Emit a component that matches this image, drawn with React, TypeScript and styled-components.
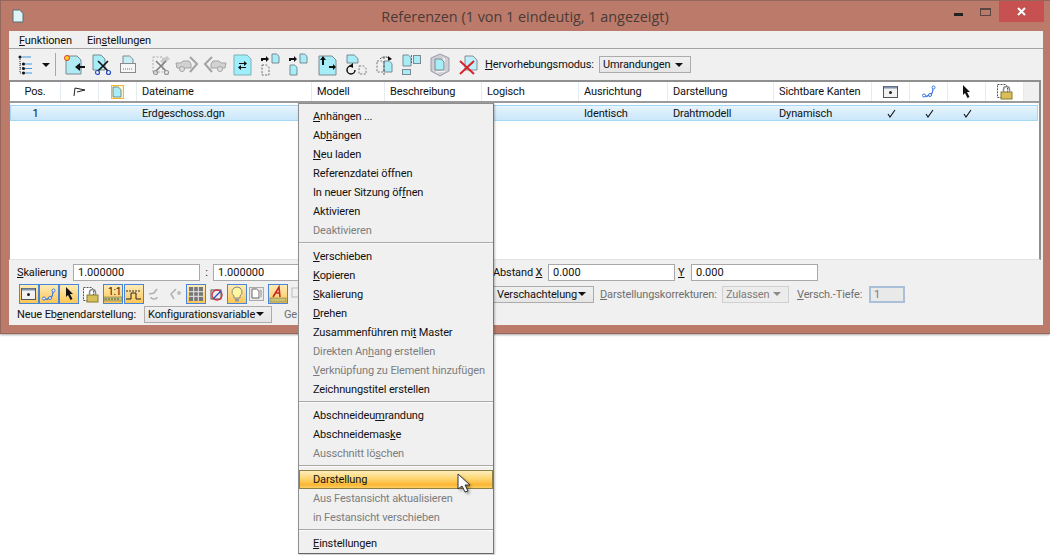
import React from 'react'
import styled, { createGlobalStyle, css } from 'styled-components'

const Global = createGlobalStyle`
  html, body { margin: 0; padding: 0; background: #fff; }
  * { box-sizing: border-box; }
  body { font-family: Roboto, "Liberation Sans", Arial, sans-serif; font-size: 11px; letter-spacing: -0.13px; color: #111; }
`

const Page = styled.div`
  position: relative;
  width: 1050px;
  height: 555px;
  overflow: hidden;
`

/* window frame */
const Win = styled.div`
  width: 1050px;
  height: 334px;
  background: #bc7a6b;
  border: 1px solid #94675a;
  border-right: 0;
  padding: 0 7px 8px 8px;
  display: flex;
  flex-direction: column;
  box-shadow: 0 1px 2px rgba(0,0,0,.35);
`

const TitleBar = styled.div`
  height: 30px;
  flex: none;
  display: grid;
  grid-template-columns: 120px 1fr 120px;
  align-items: center;
`

const TitleIcon = styled.div`
  padding: 0 0 0 3px;
  display: flex;
`

const Title = styled.div`
  font-family: "Open Sans", "Noto Sans", sans-serif;
  font-size: 14.4px;
  letter-spacing: 0;
  color: #4a3a36;
  text-align: center;
  padding: 1px 2px 0 0;
`

const Controls = styled.div`
  display: flex;
  justify-content: flex-end;
  align-self: start;
  align-items: flex-start;
  margin-right: -1px;
`

const MinBtn = styled.div`
  width: 9px;
  height: 3px;
  background: #222;
  margin: 12px 17px 0 0;
`

const MaxBtn = styled.div`
  width: 11px;
  height: 8px;
  border: 1px solid #5a4640;
  border-top-width: 2px;
  margin: 7px 8px 0 0;
`

const CloseBtn = styled.div`
  width: 45px;
  height: 21px;
  background: #c75050;
  color: #fff;
  display: flex;
  align-items: center;
  justify-content: center;
`

const Client = styled.div`
  flex: 1;
  background: #f0f0f0;
  display: flex;
  flex-direction: column;
  min-height: 0;
`

const MenuBar = styled.div`
  height: 18px;
  flex: none;
  display: flex;
  gap: 15px;
  padding: 2px 0 0 10px;
  border-bottom: 1px solid #a3a3a3;
  line-height: 16px;
  font-size: 11px;
`

const Toolbar = styled.div`
  height: 31px;
  flex: none;
  display: flex;
  align-items: center;
  padding-left: 8px;
`

const Slot = styled.span<{ $w: number }>`
  width: ${p => p.$w}px;
  flex: none;
  display: flex;
  align-items: center;
`

const Sep = styled.span`
  width: 1px;
  height: 23px;
  background: #a8a8a8;
`

const Label = styled.span<{ $w?: number; $ml?: number; $dim?: boolean }>`
  flex: none;
  white-space: nowrap;
  font-size: 11px;
  ${p => p.$w && css`width: ${p.$w}px;`}
  ${p => p.$ml && css`margin-left: ${p.$ml}px;`}
  ${p => p.$dim && css`color: #6f6f6f;`}
`

const Combo = styled.div<{ $w: number; $ml?: number; $dim?: boolean }>`
  width: ${p => p.$w}px;
  height: 17px;
  flex: none;
  border: 1px solid #acacac;
  background: linear-gradient(#f0f0f0, #e5e5e5);
  display: flex;
  align-items: center;
  justify-content: space-between;
  padding: 0 7px 0 3px;
  font-size: 11px;
  ${p => p.$ml && css`margin-left: ${p.$ml}px;`}
  ${p => p.$dim && css`color: #7c7c7c; border-color: #d0d0d0; background: #ececec;`}
`

const Caret = styled.span<{ $dim?: boolean }>`
  width: 0;
  height: 0;
  border: 4px solid transparent;
  border-top: 4px solid ${p => (p.$dim ? '#8a8a8a' : '#111')};
  border-bottom: 0;
`

/* reference table */
const Table = styled.div`
  height: 180px;
  flex: none;
  margin-right: 2px;
  background: #fff;
  border-top: 2px solid #8f8f8f;
  border-left: 1px solid #8f8f8f;
  border-right: 2px solid #8f8f8f;
  border-bottom: 1px solid #e3e3e3;
`

const cols = '51px 38px 38px 175px 73px 97px 97px 89px 106px 98px 38px 38px 38px 38px 1fr'

const HeadRow = styled.div`
  height: 21px;
  display: grid;
  grid-template-columns: ${cols};
  border-bottom: 2px solid #9b9b9b;
`

const HeadCell = styled.div<{ $center?: boolean; $blank?: boolean }>`
  display: flex;
  align-items: center;
  padding-left: 5px;
  border-right: 1px solid #e4ebf3;
  font-size: 11px;
  ${p => p.$center && css`justify-content: center; padding-left: 0;`}
  ${p => p.$blank && css`background: #f0f0f0; border-right: 0;`}
`

const DataRow = styled.div`
  height: 16px;
  margin: 2px 1px 0 0;
  display: grid;
  grid-template-columns: ${cols};
  background: linear-gradient(#e9f5fd, #c8e6fa);
  box-shadow: inset 0 0 0 1px #a6d8f6;
  font-size: 11px;
`

const DataCell = styled.div<{ $center?: boolean }>`
  display: flex;
  align-items: center;
  padding-left: 5px;
  ${p => p.$center && css`justify-content: center; padding-left: 0;`}
`

/* lower form */
const Form = styled.div`
  padding: 4px 0 0 8px;
  display: flex;
  flex-direction: column;
`

const FormRow = styled.div<{ $h: number; $mt?: number }>`
  height: ${p => p.$h}px;
  margin-top: ${p => p.$mt || 0}px;
  display: flex;
  align-items: center;
`

const Field = styled.input<{ $w?: number }>`
  width: ${p => p.$w || 127}px;
  height: 17px;
  flex: none;
  border: 1px solid #a9a9a9;
  background: #fff;
  padding: 0 4px;
  font: 11px Roboto, "Liberation Sans", Arial, sans-serif;
  color: #111;
  outline: none;
`

const DepthField = styled(Field)`
  height: 17px;
  border: 2px solid #a9c0d8;
  background: #e9e9e9;
  color: #7c7c7c;
  padding: 0 3px;
`

const Strip = styled.div`
  width: 476px;
  flex: none;
  display: flex;
  align-items: center;
  padding-left: 2px;
`

const Tog = styled.span<{ $on?: boolean; $mr?: number; $w?: number }>`
  width: ${p => p.$w || 20}px;
  height: 20px;
  flex: none;
  display: flex;
  align-items: center;
  justify-content: center;
  margin-right: ${p => p.$mr || 0}px;
  ${p => p.$on && css`
    border: 1px solid #4a86d8;
    background: linear-gradient(#fdebb8, #fdc755);
  `}
`

/* context menu and pointer lie over the window */
const Menu = styled.div`
  position: absolute;
  left: 298px;
  top: 103px;
  width: 196px;
  height: 451px;
  background: #f0f0f0;
  border: 1px solid #8f8f8f;
  border-right-color: #777;
  border-bottom-color: #666;
  padding-top: 3px;
  box-shadow: 1px 1px 2px rgba(0,0,0,.25);
`

const Item = styled.div<{ $dim?: boolean; $hot?: boolean }>`
  height: 19px;
  line-height: 19px;
  padding-left: 14px;
  font-size: 11px;
  white-space: nowrap;
  ${p => p.$dim && css`color: #7d7d7d;`}
  ${p => p.$hot && css`
    border: 1px solid #8e7f45;
    line-height: 17px;
    padding-left: 13px;
    background: linear-gradient(#fdeebc, #fdd670 45%, #fbb635 80%, #fccf60);
  `}
`

const MenuSep = styled.div`
  height: 7px;
  padding-bottom: 2px;
  display: flex;
  align-items: center;
  &::before {
    content: '';
    flex: 1;
    height: 1px;
    background: #a9a9a9;
    box-shadow: 0 1px 0 #fbfbfb;
  }
`

const Pointer = styled.svg`
  position: absolute;
  left: 456px;
  top: 472px;
`

const Mnemonic = ({ t }: { t: string }) => {
  const i = t.indexOf('&')
  if (i < 0) return <>{t}</>
  return <>{t.slice(0, i)}<u>{t[i + 1]}</u>{t.slice(i + 2)}</>
}

/* ---- drawings ---- */
const PageShape = ({ x, y, w, h, fill = '#a6edf8', stroke = '#7b8a90', dash }: { x: number; y: number; w: number; h: number; fill?: string; stroke?: string; dash?: boolean }) => {
  const f = Math.min(4, w / 3)
  return <path d={`M${x} ${y}h${w - f}l${f} ${f}v${h - f}h${-w}z`} fill={dash ? 'none' : fill} stroke={stroke} strokeDasharray={dash ? '2 1.5' : undefined} />
}

const Ic = ({ w = 24, h = 22, children }: { w?: number; h?: number; children: React.ReactNode }) => (
  <svg width={w} height={h} viewBox={`0 0 ${w} ${h}`} style={{ display: 'block', overflow: 'visible' }}>{children}</svg>
)

const Arrow = ({ d, c = '#111' }: { d: string; c?: string }) => <path d={d} fill={c} stroke="none" />

const Scissors = ({ x, y, c = '#111', h = '#2a50c8' }: { x: number; y: number; c?: string; h?: string }) => (
  <g transform={`translate(${x} ${y})`} fill="none">
    <path d="M2 0L12 10M12 0L2 10" stroke={c} strokeWidth="1.6" />
    <circle cx="1.5" cy="11.5" r="2" stroke={h} strokeWidth="1.2" />
    <circle cx="12.5" cy="11.5" r="2" stroke={h} strokeWidth="1.2" />
  </g>
)

const Car = ({ flip }: { flip?: boolean }) => (
  <Ic>
    <g transform={flip ? 'translate(24 0) scale(-1 1)' : undefined} fill="none" stroke="#a3a3a3">
      <path d="M1 9h5l2-2h6l2 3v4H2z" fill="#d2d2d2" />
      <circle cx="7" cy="15" r="2.5" fill="#e0e0e0" />
      <path d="M15 3l7 7-7 8" strokeWidth="2" />
    </g>
  </Ic>
)

const TreeIcon = () => (
  <Ic w={18} h={22}>
    <path d="M3 3v16M3 10h4M3 14h4M3 19h4" stroke="#333" fill="none" strokeDasharray="1 1" />
    <path d="M6 3h9M8 10h8M8 14.500h8M8 19h8" stroke="#3f9ae0" fill="none" strokeWidth="1.2" transform="translate(-1 0)" />
    <circle cx="3" cy="3" r="1.5" fill="#111" /><circle cx="6.500" cy="10" r="1.500" fill="#111" /><circle cx="6.500" cy="14.500" r="1.500" fill="#111" /><circle cx="6.500" cy="19" r="1.500" fill="#111" />
  </Ic>
)

const ViewIcon = () => (
  <Ic w={16} h={12}>
    <rect x=".5" y=".5" width="14" height="11" fill="#f2f2f2" stroke="#555" />
    <path d="M1 1.500h13" stroke="#7d93ae" strokeWidth="2" />
    <circle cx="7.500" cy="6.500" r="1.500" fill="#222" />
  </Ic>
)

const PathIcon = () => (
  <Ic w={14} h={13}>
    <path d="M2 11c3 1 4 0 5-1 3 0 4-3 4-7" fill="none" stroke="#3a74e0" strokeWidth="1.200" />
    <circle cx="2" cy="10.500" r="1.500" fill="#fff" stroke="#3a74e0" /><circle cx="8" cy="10" r="1.500" fill="#fff" stroke="#3a74e0" /><circle cx="11.500" cy="2.500" r="1.500" fill="#fff" stroke="#3a74e0" />
  </Ic>
)

const CursorIcon = () => (
  <Ic w={9} h={14}><path d="M1 0l7 7H5l2.500 5-2 1L3 8 1 10z" fill="#111" /></Ic>
)

const LockIcon = () => (
  <Ic w={18} h={17}>
    <path d="M1.500 1.500h8l2 2v11h-10z" fill="#fff" stroke="#555" strokeDasharray="2 1" />
    <rect x="5" y="9" width="11" height="7" fill="#d9bf5a" stroke="#8a7a30" />
    <path d="M7.500 9V6.500a3 3 0 016 0V9" fill="none" stroke="#8a8a8a" strokeWidth="1.500" />
  </Ic>
)

const Check = () => (
  <Ic w={9} h={9}><path d="M1 5l2 3 5-7" fill="none" stroke="#111" strokeWidth="1.100" /></Ic>
)

const toolIcons: { w: number; el: React.ReactNode }[] = [
  { w: 29, el: <Ic><PageShape x={2} y={2} w={15} h={18} fill="#b0eaf5" /><circle cx="3" cy="4" r="2.500" fill="#ffd21f" stroke="#e0392b" /><Arrow d="M11 13l5-4v3h5v2h-5v3z" /></Ic> },
  { w: 27, el: <Ic><PageShape x={0} y={1} w={12} h={15} /><Scissors x={3} y={7} /></Ic> },
  { w: 32, el: <Ic><PageShape x={3} y={2} w={10} h={8} fill="#c6eef6" /><rect x=".5" y="9.500" width="15" height="9" fill="#f5f5f5" stroke="#8a8a8a" /><path d="M3 15h10" stroke="#777" strokeDasharray="1 1" /></Ic> },
  { w: 23, el: <Ic><rect x="1" y="3" width="10" height="15" fill="none" stroke="#aaa" strokeDasharray="2 1.500" /><path d="M8 7l7-5 3 3-7 5z" fill="#c9c9c9" /><Scissors x={2} y={7} c="#808080" h="#969696" /></Ic> },
  { w: 28, el: <Car /> },
  { w: 30, el: <Car flip /> },
  { w: 27, el: <Ic><PageShape x={1} y={1} w={17} h={20} fill="#9eeefb" stroke="#7fb0b8" /><Arrow d="M6 9h5V7l3 2.500-3 2.500v-2H6zM13 13H8v-2l-3 2.500L8 16v-2h5z" /></Ic> },
  { w: 28, el: <Ic w={20}><Arrow d="M1 7V4h5V2l3 3-3 3V6H3v1z" /><PageShape x={12} y={0} w={7} h={9} /><PageShape x={2} y={11} w={7} h={10} dash stroke="#666" /></Ic> },
  { w: 30, el: <Ic w={20}><Arrow d="M1 7V4h5V2l3 3-3 3V6H3v1z" /><PageShape x={12} y={0} w={7} h={9} /><PageShape x={2} y={11} w={7} h={10} /></Ic> },
  { w: 28, el: <Ic><PageShape x={1} y={2} w={17} h={19} /><Arrow d="M5 2l3 4H6v5H4V6H2zM11 12h4v-2l3 3-3 3v-2h-4z" /></Ic> },
  { w: 30, el: <Ic><PageShape x={1} y={1} w={11} h={8} /><path d="M5 12a4 4 0 104 4" fill="none" stroke="#111" strokeWidth="1.500" /><Arrow d="M3 12l4-3v5z" /><PageShape x={13} y={12} w={7} h={8} dash stroke="#777" /></Ic> },
  { w: 26, el: <Ic w={18}><path d="M4 5a7 7 0 0110 0" fill="none" stroke="#333" strokeDasharray="2 1" /><Arrow d="M12 2l4 3-4 2z" /><PageShape x={8} y={7} w={8} h={11} /><PageShape x={1} y={7} w={7} h={11} dash stroke="#777" /><path d="M8 3v19" stroke="#666" strokeDasharray="2 2" /></Ic> },
  { w: 28, el: <Ic w={20}><PageShape x={1} y={1} w={8} h={11} /><rect x=".5" y="15.500" width="8" height="5" fill="#a6edf8" stroke="#7b8a90" /><rect x="11.500" y="1.500" width="7" height="8" fill="#a6edf8" stroke="#7b8a90" /><path d="M9.500 1v8" stroke="#666" strokeDasharray="2 1" /></Ic> },
  { w: 29, el: <Ic w={20}><path d="M10 0l9 4v13l-9 5-9-5V4z" fill="#cfcdd6" stroke="#9d9aa8" /><path d="M14 4v13l-8 1" fill="none" stroke="#f4f4f4" strokeWidth="1.500" /><PageShape x={5} y={5} w={9} h={11} /></Ic> },
  { w: 26, el: <Ic w={20}><PageShape x={6} y={2} w={12} h={14} fill="#bdf0f8" stroke="#889" /><path d="M1 7l14 13M15 7L1 20" stroke="#d9232a" strokeWidth="2" /></Ic> },
]

const Ratio = () => (
  <Ic w={18} h={18}>
    <rect x="0" y="12" width="18" height="4" fill="#c9c378" stroke="#6d6a3a" strokeWidth=".5" />
    <path d="M2 13v2M5 13v2M8 13v2M11 13v2M14 13v2" stroke="#333" strokeWidth=".8" />
  </Ic>
)

const RatioLabel = styled.span`
  position: absolute;
  font-size: 10px;
  line-height: 10px;
  top: 2px;
  left: 4px;
`

const RatioWrap = styled.span`
  position: relative;
  display: block;
  width: 18px;
  height: 18px;
`

const menuGroups: { t: string; dim?: boolean; hot?: boolean }[][] = [
  [{ t: '&Anhängen ...' }, { t: 'Ab&hängen' }, { t: '&Neu laden' }, { t: 'Referenzdatei öffnen' }, { t: 'In neuer Sitzung öf&fnen' }, { t: 'Aktivieren' }, { t: 'Deaktivieren', dim: true }],
  [{ t: '&Verschieben' }, { t: '&Kopieren' }, { t: '&Skalierung' }, { t: '&Drehen' }, { t: 'Zusammenführen mi&t Master' }, { t: 'Direkten An&hang erstellen', dim: true }, { t: '&Verknüpfung zu Element hinzufügen', dim: true }, { t: 'Zeichnungstitel erstellen' }],
  [{ t: 'Abschneideu&mrandung' }, { t: 'Abschneidemas&ke' }, { t: 'Ausschnitt lö&schen', dim: true }],
  [{ t: 'Darstellung', hot: true }, { t: 'Aus Festansicht aktualisieren', dim: true }, { t: 'in Festansicht verschieben', dim: true }],
  [{ t: '&Einstellungen' }],
]

const heads = ['Dateiname', 'Modell', 'Beschreibung', 'Logisch', 'Ausrichtung', 'Darstellung', 'Sichtbare Kanten']

export default function App() {
  return (
    <Page>
      <Global />
      <Win>
        <TitleBar>
          <TitleIcon>
            <Ic w={13} h={14}><PageShape x={1} y={1} w={10} h={12} fill="#dff4f7" stroke="#4f6f78" /></Ic>
          </TitleIcon>
          <Title>Referenzen (1 von 1 eindeutig, 1 angezeigt)</Title>
          <Controls>
            <MinBtn /><MaxBtn />
            <CloseBtn><Ic w={9} h={9}><path d="M1 1l7 7M8 1L1 8" stroke="#fff" strokeWidth="2" /></Ic></CloseBtn>
          </Controls>
        </TitleBar>
        <Client>
          <MenuBar>
            <span><u>F</u>unktionen</span>
            <span>Ein<u>s</u>tellungen</span>
          </MenuBar>
          <Toolbar>
            <Slot $w={25}><TreeIcon /></Slot>
            <Slot $w={13}><Caret /></Slot>
            <Slot $w={9}><Sep /></Slot>
            {toolIcons.map((ic, i) => <Slot key={i} $w={ic.w}>{ic.el}</Slot>)}
            <Label $w={114}><u>H</u>ervorhebungsmodus:</Label>
            <Combo $w={92}>Umrandungen<Caret /></Combo>
          </Toolbar>
          <Table>
            <HeadRow>
              <HeadCell $center>Pos.</HeadCell>
              <HeadCell $center><Ic w={13} h={10}><path d="M1 9L2 1l10 2-8 2" fill="none" stroke="#222" /></Ic></HeadCell>
              <HeadCell $center><Ic w={13} h={14}><rect x=".5" y=".5" width="12" height="13" fill="#fdf7c8" stroke="#f2b632" /><PageShape x={2} y={2} w={8} h={10} /></Ic></HeadCell>
              {heads.map(h => <HeadCell key={h}>{h}</HeadCell>)}
              <HeadCell $center><ViewIcon /></HeadCell>
              <HeadCell $center><PathIcon /></HeadCell>
              <HeadCell $center><CursorIcon /></HeadCell>
              <HeadCell $center><LockIcon /></HeadCell>
              <HeadCell $blank />
            </HeadRow>
            <DataRow>
              <DataCell $center>1</DataCell>
              <DataCell /><DataCell />
              <DataCell>Erdgeschoss.dgn</DataCell>
              <DataCell /><DataCell /><DataCell />
              <DataCell>Identisch</DataCell>
              <DataCell>Drahtmodell</DataCell>
              <DataCell>Dynamisch</DataCell>
              <DataCell $center><Check /></DataCell>
              <DataCell $center><Check /></DataCell>
              <DataCell $center><Check /></DataCell>
            </DataRow>
          </Table>
          <Form>
            <FormRow $h={17}>
              <Label $w={56}><u>S</u>kalierung</Label>
              <Field readOnly value="1.000000" />
              <Label $w={13} style={{ textAlign: 'center' }}>:</Label>
              <Field readOnly value="1.000000" />
              <Label $w={55} $ml={153}>Abstand <u>X</u></Label>
              <Field readOnly value="0.000" />
              <Label $w={13} $ml={3}><u>Y</u></Label>
              <Field readOnly value="0.000" />
            </FormRow>
            <FormRow $h={20} $mt={3}>
              <Strip>
                <Tog $on><ViewIcon /></Tog>
                <Tog $on><PathIcon /></Tog>
                <Tog $on $mr={2}><CursorIcon /></Tog>
                <Tog $mr={2}><LockIcon /></Tog>
                <Tog $on $mr={1}><RatioWrap><Ratio /><RatioLabel>1:1</RatioLabel></RatioWrap></Tog>
                <Tog $on $mr={3}><Ic w={16} h={12}><path d="M0 3h2M3 3h2M6 3h2M9 3h2M12 3h2" stroke="#333" /><path d="M0 11h5V5h5v6h5" fill="none" stroke="#222" /></Ic></Tog>
                <Tog $w={16} $mr={4}><Ic w={14} h={12}><path d="M1 6l5-1 3-4M3 9a3 2 0 006 0" fill="none" stroke="#b0b0b0" strokeWidth="1.500" /></Ic></Tog>
                <Tog $w={16} $mr={3}><Ic w={14} h={12}><path d="M8 1L3 6l3 5" fill="none" stroke="#b0b0b0" strokeWidth="1.500" /><circle cx="11" cy="5" r="2" fill="#bdbdbd" /></Ic></Tog>
                <Tog $on $mr={4}><Ic w={14} h={14}><rect width="14" height="14" fill="#777" /><path d="M0 4.700h14M0 9.300h14M4.700 0v14M9.300 0v14" stroke="#e8e8e8" /></Ic></Tog>
                <Tog $w={14} $mr={3}><Ic w={14} h={13}><rect x="1" y="2" width="10" height="9" fill="#eee" stroke="#555" /><circle cx="7" cy="7" r="5" fill="none" stroke="#cc3340" strokeWidth="1.300" /><path d="M3 11l8-8" stroke="#2a50c8" strokeWidth="1.300" /></Ic></Tog>
                <Tog $on $mr={2}><Ic w={12} h={16}><path d="M6 1a5 5 0 00-3 9v2h6v-2a5 5 0 00-3-9z" fill="#fff6a0" stroke="#888" /><rect x="4" y="12.500" width="4" height="3" fill="#999" /></Ic></Tog>
                <Tog $w={15} $mr={4}><Ic w={15} h={15}><rect x=".5" y=".5" width="14" height="13" fill="#e8e8e8" stroke="#aaa" /><PageShape x={3} y={2} w={7} h={9} fill="#fff" stroke="#666" /><path d="M10 3h3v7h-3" fill="#bbb" /></Ic></Tog>
                <Tog $on $mr={3}><Ic w={16} h={17}><path d="M3 11L9 1l1 10M5 7h5" fill="none" stroke="#c7282b" strokeWidth="1.600" /><rect y="12" width="16" height="4" fill="#c9c378" stroke="#6d6a3a" strokeWidth=".5" /></Ic></Tog>
                <Tog $w={14}><Ic w={14} h={14}><rect x="1" y="1" width="11" height="9" fill="none" stroke="#bbb" /></Ic></Tog>
              </Strip>
              <Combo $w={101}>Verschachtelung<Caret /></Combo>
              <Label $dim $w={122} $ml={6}><u>D</u>arstellungskorrekturen:</Label>
              <Combo $dim $w={67}>Zulassen<Caret $dim /></Combo>
              <Label $dim $w={72} $ml={8}><u>V</u>ersch.-Tiefe:</Label>
              <DepthField readOnly value="1" $w={36} />
            </FormRow>
            <FormRow $h={16} $mt={2}>
              <Label $w={127}>Neue Eb<u>e</u>nendarstellung:</Label>
              <Combo $w={128}>Konfigurationsvariable<Caret /></Combo>
              <Label $dim $ml={12}>Ge</Label>
            </FormRow>
          </Form>
        </Client>
      </Win>
      <Menu>
        {menuGroups.map((group, g) => (
          <React.Fragment key={g}>
            {g > 0 && <MenuSep />}
            {group.map(it => (
              <Item key={it.t} $dim={it.dim} $hot={it.hot}><Mnemonic t={it.t} /></Item>
            ))}
          </React.Fragment>
        ))}
      </Menu>
      <Pointer width="22" height="26" viewBox="0 0 22 26">
        <defs>
          <filter id="ps" x="-30%" y="-30%" width="170%" height="170%"><feGaussianBlur stdDeviation="1.500" /></filter>
        </defs>
        <path d="M4 4v15l4-3 3 6 3-1-3-6h5z" fill="#000" opacity=".45" filter="url(#ps)" />
        <path d="M2 2v15l4-3 3 6 3-1-3-6h5z" fill="#fff" stroke="#333" />
      </Pointer>
    </Page>
  )
}
